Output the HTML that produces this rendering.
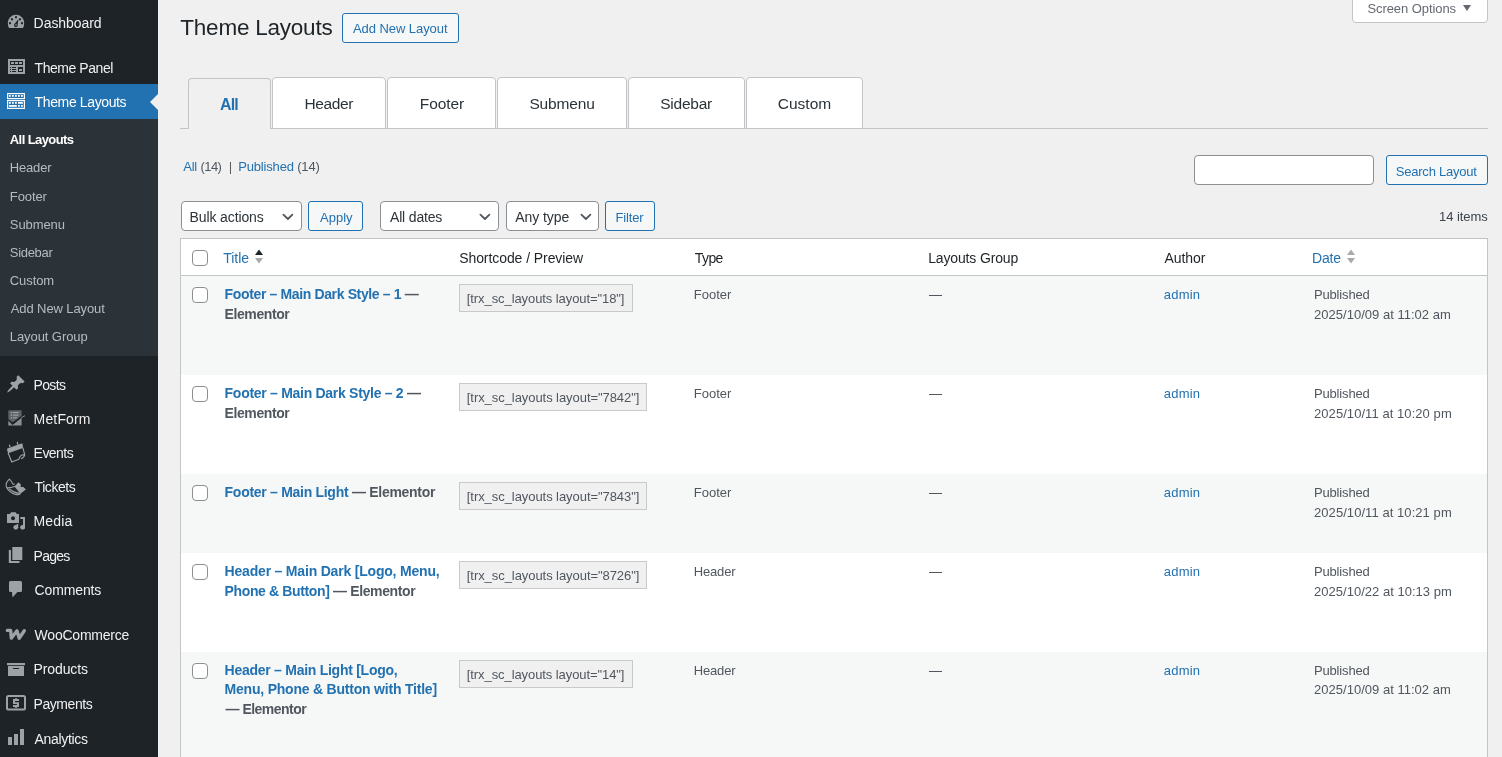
<!DOCTYPE html>
<html><head><meta charset="utf-8"><title>Theme Layouts</title>
<style>
html,body{margin:0;padding:0;width:1502px;height:757px;overflow:hidden;background:#f0f0f1;font-family:"Liberation Sans", sans-serif;}
#wrap{position:absolute;left:0;top:0;width:1502px;height:757px;background:#f0f0f1;will-change:transform;overflow:hidden}
</style></head><body><div id="wrap">
<div style="position:absolute;left:0px;top:0px;width:158px;height:757px;background:#1d2327"></div>
<div style="position:absolute;left:0px;top:119px;width:158px;height:237px;background:#2c3338"></div>
<div style="position:absolute;left:0px;top:84px;width:158px;height:35px;background:#2271b1"></div>
<div style="position:absolute;left:150px;top:94px;width:0;height:0;border-top:8px solid transparent;border-bottom:8px solid transparent;border-right:8px solid #f0f0f1"></div>
<div id="t1" style="position:absolute;left:33.60px;top:3.15px;line-height:40px;font-size:14px;font-weight:400;color:#f0f0f1;white-space:nowrap;letter-spacing:-0.056px;">Dashboard</div>
<div id="t2" style="position:absolute;left:34.60px;top:48.15px;line-height:40px;font-size:14px;font-weight:400;color:#f0f0f1;white-space:nowrap;letter-spacing:-0.450px;">Theme Panel</div>
<div id="t3" style="position:absolute;left:34.60px;top:82.15px;line-height:40px;font-size:14px;font-weight:400;color:#ffffff;white-space:nowrap;letter-spacing:-0.375px;">Theme Layouts</div>
<div id="t4" style="position:absolute;left:33.60px;top:365.15px;line-height:40px;font-size:14px;font-weight:400;color:#f0f0f1;white-space:nowrap;letter-spacing:-0.675px;">Posts</div>
<div id="t5" style="position:absolute;left:33.60px;top:399.15px;line-height:40px;font-size:14px;font-weight:400;color:#f0f0f1;white-space:nowrap;letter-spacing:0.150px;">MetForm</div>
<div id="t6" style="position:absolute;left:33.60px;top:433.15px;line-height:40px;font-size:14px;font-weight:400;color:#f0f0f1;white-space:nowrap;letter-spacing:-0.540px;">Events</div>
<div id="t7" style="position:absolute;left:34.60px;top:467.15px;line-height:40px;font-size:14px;font-weight:400;color:#f0f0f1;white-space:nowrap;letter-spacing:-0.450px;">Tickets</div>
<div id="t8" style="position:absolute;left:33.60px;top:501.15px;line-height:40px;font-size:14px;font-weight:400;color:#f0f0f1;white-space:nowrap;letter-spacing:0.112px;">Media</div>
<div id="t9" style="position:absolute;left:33.60px;top:536.15px;line-height:40px;font-size:14px;font-weight:400;color:#f0f0f1;white-space:nowrap;letter-spacing:-0.787px;">Pages</div>
<div id="t10" style="position:absolute;left:34.60px;top:570.15px;line-height:40px;font-size:14px;font-weight:400;color:#f0f0f1;white-space:nowrap;letter-spacing:-0.129px;">Comments</div>
<div id="t11" style="position:absolute;left:34.60px;top:615.15px;line-height:40px;font-size:14px;font-weight:400;color:#f0f0f1;white-space:nowrap;letter-spacing:-0.225px;">WooCommerce</div>
<div id="t12" style="position:absolute;left:33.60px;top:649.15px;line-height:40px;font-size:14px;font-weight:400;color:#f0f0f1;white-space:nowrap;letter-spacing:-0.129px;">Products</div>
<div id="t13" style="position:absolute;left:33.60px;top:684.15px;line-height:40px;font-size:14px;font-weight:400;color:#f0f0f1;white-space:nowrap;letter-spacing:-0.450px;">Payments</div>
<div id="t14" style="position:absolute;left:34.60px;top:719.15px;line-height:40px;font-size:14px;font-weight:400;color:#f0f0f1;white-space:nowrap;letter-spacing:-0.337px;">Analytics</div>
<div id="t15" style="position:absolute;left:9.80px;top:119.50px;line-height:40px;font-size:13px;font-weight:700;color:#ffffff;white-space:nowrap;letter-spacing:-0.585px;">All Layouts</div>
<div id="t16" style="position:absolute;left:9.80px;top:147.50px;line-height:40px;font-size:13px;font-weight:400;color:#b5bbc1;white-space:nowrap;letter-spacing:-0.180px;">Header</div>
<div id="t17" style="position:absolute;left:9.80px;top:176.50px;line-height:40px;font-size:13px;font-weight:400;color:#b5bbc1;white-space:nowrap;letter-spacing:-0.090px;">Footer</div>
<div id="t18" style="position:absolute;left:9.80px;top:204.50px;line-height:40px;font-size:13px;font-weight:400;color:#b5bbc1;white-space:nowrap;letter-spacing:-0.075px;">Submenu</div>
<div id="t19" style="position:absolute;left:9.80px;top:232.50px;line-height:40px;font-size:13px;font-weight:400;color:#b5bbc1;white-space:nowrap;letter-spacing:-0.300px;">Sidebar</div>
<div id="t20" style="position:absolute;left:9.80px;top:260.50px;line-height:40px;font-size:13px;font-weight:400;color:#b5bbc1;white-space:nowrap;letter-spacing:-0.090px;">Custom</div>
<div id="t21" style="position:absolute;left:10.80px;top:288.50px;line-height:40px;font-size:13px;font-weight:400;color:#b5bbc1;white-space:nowrap;letter-spacing:-0.104px;">Add New Layout</div>
<div id="t22" style="position:absolute;left:9.80px;top:316.50px;line-height:40px;font-size:13px;font-weight:400;color:#b5bbc1;white-space:nowrap;letter-spacing:-0.082px;">Layout Group</div>
<svg style="position:absolute;left:7px;top:14px" width="18" height="15" viewBox="0 0 18 15"><path d="M2 14 L16 14 Q17.2 11.5 17.2 9 A8.2 8.2 0 0 0 0.8 9 Q0.8 11.5 2 14 Z" fill="#9ca2a7"/>
<rect x="8" y="2.2" width="2" height="2" fill="#1d2327"/><rect x="4" y="4.3" width="2" height="2" fill="#1d2327"/><rect x="12" y="4.3" width="2" height="2" fill="#1d2327"/>
<rect x="2" y="8.2" width="2" height="2" fill="#1d2327"/><rect x="14" y="8.2" width="2" height="2" fill="#1d2327"/>
<path d="M11.6 5 L10.6 10.4 A1.9 1.9 0 1 1 7.6 9.8 Z" fill="#1d2327"/><circle cx="9" cy="11" r="0.8" fill="#9ca2a7"/></svg>
<svg style="position:absolute;left:8px;top:59px" width="17" height="15" viewBox="0 0 17 15"><rect x="0" y="0" width="17" height="15" fill="#9ca2a7"/>
<rect x="2" y="2" width="13" height="4" fill="#1d2327"/><rect x="3" y="3" width="3" height="2" fill="#9ca2a7"/><rect x="7" y="3" width="3" height="2" fill="#9ca2a7"/><rect x="11" y="3" width="3" height="2" fill="#9ca2a7"/>
<rect x="2" y="8" width="1" height="1" fill="#1d2327"/><rect x="4" y="8" width="4" height="1" fill="#1d2327"/>
<rect x="2" y="10" width="1" height="1" fill="#1d2327"/><rect x="4" y="10" width="4" height="1" fill="#1d2327"/>
<rect x="2" y="12" width="1" height="1" fill="#1d2327"/><rect x="4" y="12" width="4" height="1" fill="#1d2327"/>
<rect x="10" y="8" width="5" height="5" fill="#1d2327"/><rect x="11" y="10" width="3" height="2" fill="#9ca2a7"/></svg>
<svg style="position:absolute;left:7px;top:93px" width="18" height="16" viewBox="0 0 18 16"><rect x="0.6" y="0.6" width="16.8" height="5" fill="none" stroke="#ffffff" stroke-width="1.2"/>
<rect x="2" y="2" width="1.8" height="1.8" fill="#ffffff"/><rect x="5" y="2" width="1.8" height="1.8" fill="#ffffff"/><rect x="8" y="2" width="1.8" height="1.8" fill="#ffffff"/><rect x="11" y="2" width="1.8" height="1.8" fill="#ffffff"/><rect x="14" y="2" width="1.8" height="1.8" fill="#ffffff"/>
<rect x="0.6" y="7.6" width="16.8" height="7.8" fill="none" stroke="#ffffff" stroke-width="1.2"/>
<rect x="2" y="9" width="1.8" height="1.8" fill="#ffffff"/><rect x="5" y="9" width="1.8" height="1.8" fill="#ffffff"/><rect x="8" y="9" width="1.8" height="1.8" fill="#ffffff"/><rect x="11" y="9" width="4.8" height="1.8" fill="#ffffff"/>
<rect x="2" y="12" width="7.8" height="1.8" fill="#ffffff"/><rect x="11" y="12" width="1.8" height="1.8" fill="#ffffff"/><rect x="14" y="12" width="1.8" height="1.8" fill="#ffffff"/></svg>
<svg style="position:absolute;left:6px;top:374px" width="20" height="20" viewBox="0 0 20 20"><path d="M10.44 3.02l1.82-1.82 6.36 6.35-1.83 1.82c-1.05-.68-2.48-.57-3.41.36l-.75.75c-.92.93-1.04 2.35-.35 3.41l-1.83 1.82-2.41-2.41-2.8 2.79c-.42.42-3.38 2.71-3.8 2.29s1.86-3.39 2.28-3.81l2.79-2.79L4.1 9.36l1.83-1.82c1.05.69 2.48.57 3.4-.36l.75-.75c.93-.92 1.05-2.35.36-3.41z" fill="#9ca2a7"/></svg>
<svg style="position:absolute;left:8px;top:410px" width="18" height="16" viewBox="0 0 18 16"><path d="M0.8 0.5 Q0.3 0.2 0.3 1 V9.2 L4.6 12.3 L13.6 5.8 V1 Q13.6 0.2 13 0.2 H1 Z" fill="#5f6367"/>
<path d="M0.3 10.8 L4.6 14.9 L13.6 7.7 V15.6 H0.3 Z" fill="#8b8f93"/>
<path d="M13.3 7.6 L17 5.7" stroke="#8b8f93" stroke-width="1"/>
<rect x="2.8" y="2" width="1.4" height="1.3" fill="#9ca2a7"/><rect x="5" y="2" width="5.6" height="1.1" fill="#9ca2a7"/>
<rect x="2.8" y="4.6" width="1.4" height="1.3" fill="#9ca2a7"/><rect x="5" y="4.6" width="5.6" height="1.1" fill="#9ca2a7"/>
<rect x="2.8" y="7.2" width="1.4" height="1.3" fill="#9ca2a7"/><rect x="5" y="7.2" width="4" height="1.1" fill="#9ca2a7"/></svg>
<svg style="position:absolute;left:5px;top:440px" width="22" height="24" viewBox="0 0 22 24"><path d="M2.2 8.6 L16.4 3.6 Q17.5 3.3 17.7 4.4 L17.9 7.9 L3.2 13.3 L2.2 10.6 Z" fill="#9ca2a7"/>
<path d="M4.5 5.2 L4.9 6.6 M12.4 2.5 L12.6 4.1" stroke="#9ca2a7" stroke-width="1.3" stroke-linecap="round"/>
<path d="M3.2 13.2 L6.8 22 L13.9 19.2 Q15 15.6 16.8 15 L19.7 14.6 M17.9 7.9 L19.7 14.6 Q19.6 17.2 16.5 18.6" fill="none" stroke="#9ca2a7" stroke-width="1.15" stroke-linejoin="round" stroke-linecap="round"/></svg>
<svg style="position:absolute;left:4px;top:476px" width="24" height="22" viewBox="0 0 24 22"><path d="M10.5 10.6 L14.5 6.2 L16.9 8.6 L16.6 11 L19.4 11.1 L21.9 13.5 L16.3 17.8 Z" fill="#9ca2a7"/>
<path d="M10.4 8.1 Q8.9 8.6 8.2 7 Q7.6 5.2 6.6 4.6 L5.4 3.1 Q1.2 6.5 2.4 11 Q5 16.5 11.5 18.4 Q14.5 19 16.3 17.8 M3.4 11.9 Q7 11.8 10.6 10.6 M5.6 13 Q9 16.4 15.6 17.4" fill="none" stroke="#9ca2a7" stroke-width="1.1" stroke-linejoin="round" stroke-linecap="round"/></svg>
<svg style="position:absolute;left:7px;top:512px" width="18" height="18" viewBox="0 0 18 18"><path d="M0 2 H3 L4 0.2 H8.8 L9.8 2 H12 V11 H0 Z" fill="#9ca2a7"/>
<circle cx="6" cy="6.2" r="2" fill="#1d2327"/>
<rect x="13.3" y="5" width="4.7" height="2" fill="#9ca2a7"/><rect x="16" y="5" width="2" height="11.6" fill="#9ca2a7"/><circle cx="15.6" cy="15.3" r="2.4" fill="#9ca2a7"/>
<rect x="9.6" y="12" width="1.6" height="3.5" fill="#9ca2a7"/><circle cx="8.8" cy="15.3" r="2.4" fill="#9ca2a7"/></svg>
<svg style="position:absolute;left:8px;top:546px" width="15" height="17" viewBox="0 0 15 17"><rect x="4.3" y="1" width="10" height="13" fill="#9ca2a7"/>
<path d="M0.8 4 H3 V15 H11.5 V17 H0.8 Z" fill="#9ca2a7"/></svg>
<svg style="position:absolute;left:8px;top:580px" width="15" height="18" viewBox="0 0 15 18"><path d="M2.5 1 H12.5 Q14 1 14 2.5 V10.5 Q14 12 12.5 12 H9.5 L4.5 17.5 L4 12 H2.5 Q1 12 1 10.5 V2.5 Q1 1 2.5 1 Z" fill="#9ca2a7"/></svg>
<svg style="position:absolute;left:5px;top:628px" width="22" height="13" viewBox="0 0 22 13"><polyline points="2.3,2.4 5.7,2.4 6.3,10.2 12,2.7 14.2,10.2 19.3,2.7" fill="none" stroke="#9ca2a7" stroke-width="3.3" stroke-linecap="round" stroke-linejoin="round"/></svg>
<svg style="position:absolute;left:7px;top:662px" width="18" height="15" viewBox="0 0 18 15"><rect x="0" y="1" width="18" height="2.2" fill="#9ca2a7"/>
<path d="M1 4 H17 V14 H1 Z M6 6 V7.1 H12 V6 Z" fill="#9ca2a7" fill-rule="evenodd"/></svg>
<svg style="position:absolute;left:6px;top:694px" width="20" height="17" viewBox="0 0 20 17"><rect x="1" y="2" width="18" height="13.5" rx="1.6" fill="none" stroke="#9ca2a7" stroke-width="2"/>
<path d="M7 5 H13 V7.1 H9.1 V8.2 H13 V13 H7 V11.1 H10.9 V10.1 H7 Z" fill="#9ca2a7"/>
<rect x="9.1" y="4.2" width="1.9" height="1" fill="#9ca2a7"/><rect x="9.1" y="12.9" width="1.9" height="1" fill="#9ca2a7"/></svg>
<svg style="position:absolute;left:8px;top:728px" width="17" height="17" viewBox="0 0 17 17"><rect x="0" y="9" width="4" height="8" fill="#9ca2a7"/><rect x="6" y="6" width="4" height="11" fill="#9ca2a7"/><rect x="12" y="1" width="4" height="16" fill="#9ca2a7"/></svg>
<div style="position:absolute;left:1352px;top:-1px;width:134px;height:22px;background:#fff;border:1px solid #c3c4c7;border-radius:0 0 4px 4px"></div>
<div id="t23" style="position:absolute;left:1367.40px;top:-11.50px;line-height:40px;font-size:13px;font-weight:400;color:#646970;white-space:nowrap;letter-spacing:-0.069px;">Screen Options</div>
<div style="position:absolute;left:1463px;top:5px;width:0;height:0;border-left:4px solid transparent;border-right:4px solid transparent;border-top:6px solid #646970"></div>
<div id="t24" style="position:absolute;left:180.30px;top:8.20px;line-height:40px;font-size:22.5px;font-weight:400;color:#1d2327;white-space:nowrap;letter-spacing:-0.225px;">Theme Layouts</div>
<div style="position:absolute;left:342px;top:13px;width:115px;height:28px;background:#f6f7f7;border:1px solid #2271b1;border-radius:3px"></div>
<div id="t25" style="position:absolute;left:353.00px;top:8.50px;line-height:40px;font-size:13px;font-weight:400;color:#2271b1;white-space:nowrap;letter-spacing:-0.069px;">Add New Layout</div>
<div style="position:absolute;left:180px;top:128px;width:1308px;height:1px;background:#c3c4c7"></div>
<div style="position:absolute;left:188px;top:78px;width:81px;height:50px;background:#f0f0f1;border:1px solid #c3c4c7;border-bottom:none;border-radius:4px 4px 0 0"></div>
<div id="t26" style="position:absolute;left:220.00px;top:85.46px;line-height:40px;font-size:16px;font-weight:700;color:#2271b1;white-space:nowrap;letter-spacing:-0.900px;">All</div>
<div style="position:absolute;left:272px;top:77px;width:112px;height:50px;background:#fff;border:1px solid #c3c4c7;border-radius:4px 4px 0 0"></div>
<div id="t27" style="position:absolute;left:304.40px;top:83.63px;line-height:40px;font-size:15.5px;font-weight:400;color:#2c3338;white-space:nowrap;letter-spacing:-0.360px;">Header</div>
<div style="position:absolute;left:387px;top:77px;width:107px;height:50px;background:#fff;border:1px solid #c3c4c7;border-radius:4px 4px 0 0"></div>
<div id="t28" style="position:absolute;left:419.80px;top:83.63px;line-height:40px;font-size:15.5px;font-weight:400;color:#2c3338;white-space:nowrap;letter-spacing:-0.090px;">Footer</div>
<div style="position:absolute;left:497px;top:77px;width:128px;height:50px;background:#fff;border:1px solid #c3c4c7;border-radius:4px 4px 0 0"></div>
<div id="t29" style="position:absolute;left:529.40px;top:83.63px;line-height:40px;font-size:15.5px;font-weight:400;color:#2c3338;white-space:nowrap;letter-spacing:-0.150px;">Submenu</div>
<div style="position:absolute;left:628px;top:77px;width:115px;height:50px;background:#fff;border:1px solid #c3c4c7;border-radius:4px 4px 0 0"></div>
<div id="t30" style="position:absolute;left:660.20px;top:83.63px;line-height:40px;font-size:15.5px;font-weight:400;color:#2c3338;white-space:nowrap;letter-spacing:-0.225px;">Sidebar</div>
<div style="position:absolute;left:746px;top:77px;width:115px;height:50px;background:#fff;border:1px solid #c3c4c7;border-radius:4px 4px 0 0"></div>
<div id="t31" style="position:absolute;left:777.80px;top:83.63px;line-height:40px;font-size:15.5px;font-weight:400;color:#2c3338;white-space:nowrap;letter-spacing:0.000px;">Custom</div>
<div id="t32" style="position:absolute;left:183.20px;top:146.50px;line-height:40px;font-size:13px;font-weight:400;color:#2271b1;white-space:nowrap;letter-spacing:-0.225px;">All</div>
<div id="t33" style="position:absolute;left:200.60px;top:146.50px;line-height:40px;font-size:13px;font-weight:400;color:#50575e;white-space:nowrap;letter-spacing:-0.600px;">(14)</div>
<div style="position:absolute;left:230px;top:162px;width:1px;height:12px;background:#50575e"></div>
<div id="t34" style="position:absolute;left:238.20px;top:146.50px;line-height:40px;font-size:13px;font-weight:400;color:#2271b1;white-space:nowrap;letter-spacing:-0.169px;">Published</div>
<div id="t35" style="position:absolute;left:297.20px;top:146.50px;line-height:40px;font-size:13px;font-weight:400;color:#50575e;white-space:nowrap;letter-spacing:-0.150px;">(14)</div>
<div style="position:absolute;left:181px;top:201px;width:119px;height:28px;background:#fff;border:1px solid #8c8f94;border-radius:4px"></div>
<div id="t36" style="position:absolute;left:189.60px;top:197.15px;line-height:40px;font-size:14px;font-weight:400;color:#2c3338;white-space:nowrap;letter-spacing:-0.123px;">Bulk actions</div>
<svg style="position:absolute;left:282px;top:213px" width="12" height="8" viewBox="0 0 12 8"><path d="M1.4 1.6 L5.9 6 L10.4 1.6" fill="none" stroke="#50575e" stroke-width="1.8" stroke-linecap="round" stroke-linejoin="round"/></svg>
<div style="position:absolute;left:308px;top:201px;width:53px;height:28px;background:#f6f7f7;border:1px solid #2271b1;border-radius:3px"></div>
<div id="t37" style="position:absolute;left:320.00px;top:197.50px;line-height:40px;font-size:13px;font-weight:400;color:#2271b1;white-space:nowrap;">Apply</div>
<div style="position:absolute;left:380px;top:201px;width:117px;height:28px;background:#fff;border:1px solid #8c8f94;border-radius:4px"></div>
<div id="t38" style="position:absolute;left:390.00px;top:197.15px;line-height:40px;font-size:14px;font-weight:400;color:#2c3338;white-space:nowrap;letter-spacing:-0.169px;">All dates</div>
<svg style="position:absolute;left:479px;top:213px" width="12" height="8" viewBox="0 0 12 8"><path d="M1.4 1.6 L5.9 6 L10.4 1.6" fill="none" stroke="#50575e" stroke-width="1.8" stroke-linecap="round" stroke-linejoin="round"/></svg>
<div style="position:absolute;left:506px;top:201px;width:91px;height:28px;background:#fff;border:1px solid #8c8f94;border-radius:4px"></div>
<div id="t39" style="position:absolute;left:515.20px;top:197.15px;line-height:40px;font-size:14px;font-weight:400;color:#2c3338;white-space:nowrap;letter-spacing:-0.064px;">Any type</div>
<svg style="position:absolute;left:579.5px;top:213px" width="12" height="8" viewBox="0 0 12 8"><path d="M1.4 1.6 L5.9 6 L10.4 1.6" fill="none" stroke="#50575e" stroke-width="1.8" stroke-linecap="round" stroke-linejoin="round"/></svg>
<div style="position:absolute;left:605px;top:201px;width:48px;height:28px;background:#f6f7f7;border:1px solid #2271b1;border-radius:3px"></div>
<div id="t40" style="position:absolute;left:615.60px;top:197.50px;line-height:40px;font-size:13px;font-weight:400;color:#2271b1;white-space:nowrap;letter-spacing:-0.180px;">Filter</div>
<div style="position:absolute;left:1194px;top:155px;width:178px;height:28px;background:#fff;border:1px solid #8c8f94;border-radius:4px"></div>
<div style="position:absolute;left:1386px;top:155px;width:100px;height:28px;background:#f6f7f7;border:1px solid #2271b1;border-radius:3px"></div>
<div id="t41" style="position:absolute;left:1395.80px;top:151.50px;line-height:40px;font-size:13px;font-weight:400;color:#2271b1;white-space:nowrap;letter-spacing:-0.225px;">Search Layout</div>
<div id="t42" style="position:absolute;left:1439.00px;top:196.50px;line-height:40px;font-size:13px;font-weight:400;color:#3c434a;white-space:nowrap;letter-spacing:-0.064px;">14 items</div>
<div style="position:absolute;left:180px;top:238px;width:1306px;height:530px;background:#fff;border:1px solid #c3c4c7"></div>
<div style="position:absolute;left:181px;top:275px;width:1306px;height:1px;background:#c3c4c7"></div>
<div style="position:absolute;left:181px;top:276px;width:1306px;height:99px;background:#f6f7f7"></div>
<div style="position:absolute;left:181px;top:474px;width:1306px;height:79px;background:#f6f7f7"></div>
<div style="position:absolute;left:181px;top:652px;width:1306px;height:105px;background:#f6f7f7"></div>
<div style="position:absolute;left:192px;top:250px;width:14px;height:14px;background:#fff;border:1px solid #8c8f94;border-radius:4px"></div>
<div id="t43" style="position:absolute;left:223.20px;top:238.15px;line-height:40px;font-size:14px;font-weight:400;color:#2271b1;white-space:nowrap;letter-spacing:0.000px;">Title</div>
<svg style="position:absolute;left:254px;top:248px" width="10" height="17" viewBox="0 0 10 17"><path d="M1 7 L5 1.5 L9 7 Z" fill="#1d2327"/><path d="M1 10 L9 10 L5 15.5 Z" fill="#a7aaad"/></svg>
<div id="t44" style="position:absolute;left:459.20px;top:238.15px;line-height:40px;font-size:14px;font-weight:400;color:#1d2327;white-space:nowrap;letter-spacing:-0.075px;">Shortcode / Preview</div>
<div id="t45" style="position:absolute;left:694.80px;top:238.15px;line-height:40px;font-size:14px;font-weight:400;color:#1d2327;white-space:nowrap;letter-spacing:-0.600px;">Type</div>
<div id="t46" style="position:absolute;left:928.20px;top:238.15px;line-height:40px;font-size:14px;font-weight:400;color:#1d2327;white-space:nowrap;letter-spacing:-0.150px;">Layouts Group</div>
<div id="t47" style="position:absolute;left:1164.60px;top:238.15px;line-height:40px;font-size:14px;font-weight:400;color:#1d2327;white-space:nowrap;letter-spacing:-0.090px;">Author</div>
<div id="t48" style="position:absolute;left:1312.00px;top:238.15px;line-height:40px;font-size:14px;font-weight:400;color:#2271b1;white-space:nowrap;letter-spacing:-0.150px;">Date</div>
<svg style="position:absolute;left:1346px;top:248px" width="10" height="17" viewBox="0 0 10 17"><path d="M1 7 L5 1.5 L9 7 Z" fill="#a7aaad"/><path d="M1 10 L9 10 L5 15.5 Z" fill="#a7aaad"/></svg>
<div style="position:absolute;left:192px;top:287px;width:14px;height:14px;background:#fff;border:1px solid #8c8f94;border-radius:4px"></div>
<div id="t49" style="position:absolute;left:224.60px;top:274.15px;line-height:40px;font-size:14px;font-weight:700;color:#50575e;white-space:nowrap;letter-spacing:-0.362px;"><span style="color:#2271b1">Footer – Main Dark Style – 1</span> —</div>
<div id="t50" style="position:absolute;left:224.60px;top:294.15px;line-height:40px;font-size:14px;font-weight:700;color:#50575e;white-space:nowrap;letter-spacing:-0.412px;">Elementor</div>
<div style="position:absolute;left:459px;top:284px;width:172px;height:26px;background:#f0f0f1;border:1px solid #c8c9ca"></div>
<div id="t51" style="position:absolute;left:466.80px;top:278.50px;line-height:40px;font-size:13px;font-weight:400;color:#50575e;white-space:nowrap;letter-spacing:-0.083px;">[trx_sc_layouts layout="18"]</div>
<div id="t52" style="position:absolute;left:693.80px;top:274.50px;line-height:40px;font-size:13px;font-weight:400;color:#50575e;white-space:nowrap;letter-spacing:0.000px;">Footer</div>
<div style="position:absolute;left:929px;top:295px;width:13px;height:1px;background:#50575e"></div>
<div id="t53" style="position:absolute;left:1163.80px;top:274.50px;line-height:40px;font-size:13px;font-weight:400;color:#2271b1;white-space:nowrap;letter-spacing:0.225px;">admin</div>
<div id="t54" style="position:absolute;left:1314.00px;top:274.50px;line-height:40px;font-size:13px;font-weight:400;color:#50575e;white-space:nowrap;letter-spacing:-0.169px;">Published</div>
<div id="t55" style="position:absolute;left:1314.00px;top:294.50px;line-height:40px;font-size:13px;font-weight:400;color:#50575e;white-space:nowrap;letter-spacing:0.021px;">2025/10/09 at 11:02 am</div>
<div style="position:absolute;left:192px;top:386px;width:14px;height:14px;background:#fff;border:1px solid #8c8f94;border-radius:4px"></div>
<div id="t56" style="position:absolute;left:224.60px;top:373.15px;line-height:40px;font-size:14px;font-weight:700;color:#50575e;white-space:nowrap;letter-spacing:-0.284px;"><span style="color:#2271b1">Footer – Main Dark Style – 2</span> —</div>
<div id="t57" style="position:absolute;left:224.60px;top:393.15px;line-height:40px;font-size:14px;font-weight:700;color:#50575e;white-space:nowrap;letter-spacing:-0.412px;">Elementor</div>
<div style="position:absolute;left:459px;top:383px;width:186px;height:26px;background:#f0f0f1;border:1px solid #c8c9ca"></div>
<div id="t58" style="position:absolute;left:466.80px;top:377.50px;line-height:40px;font-size:13px;font-weight:400;color:#50575e;white-space:nowrap;letter-spacing:-0.062px;">[trx_sc_layouts layout="7842"]</div>
<div id="t59" style="position:absolute;left:693.80px;top:373.50px;line-height:40px;font-size:13px;font-weight:400;color:#50575e;white-space:nowrap;letter-spacing:0.000px;">Footer</div>
<div style="position:absolute;left:929px;top:394px;width:13px;height:1px;background:#50575e"></div>
<div id="t60" style="position:absolute;left:1163.80px;top:373.50px;line-height:40px;font-size:13px;font-weight:400;color:#2271b1;white-space:nowrap;letter-spacing:0.225px;">admin</div>
<div id="t61" style="position:absolute;left:1314.00px;top:373.50px;line-height:40px;font-size:13px;font-weight:400;color:#50575e;white-space:nowrap;letter-spacing:-0.169px;">Published</div>
<div id="t62" style="position:absolute;left:1314.00px;top:393.50px;line-height:40px;font-size:13px;font-weight:400;color:#50575e;white-space:nowrap;letter-spacing:0.064px;">2025/10/11 at 10:20 pm</div>
<div style="position:absolute;left:192px;top:485px;width:14px;height:14px;background:#fff;border:1px solid #8c8f94;border-radius:4px"></div>
<div id="t63" style="position:absolute;left:224.60px;top:472.15px;line-height:40px;font-size:14px;font-weight:700;color:#50575e;white-space:nowrap;letter-spacing:-0.285px;"><span style="color:#2271b1">Footer – Main Light</span> — Elementor</div>
<div style="position:absolute;left:459px;top:482px;width:186px;height:26px;background:#f0f0f1;border:1px solid #c8c9ca"></div>
<div id="t64" style="position:absolute;left:466.80px;top:476.50px;line-height:40px;font-size:13px;font-weight:400;color:#50575e;white-space:nowrap;letter-spacing:-0.062px;">[trx_sc_layouts layout="7843"]</div>
<div id="t65" style="position:absolute;left:693.80px;top:472.50px;line-height:40px;font-size:13px;font-weight:400;color:#50575e;white-space:nowrap;letter-spacing:0.000px;">Footer</div>
<div style="position:absolute;left:929px;top:493px;width:13px;height:1px;background:#50575e"></div>
<div id="t66" style="position:absolute;left:1163.80px;top:472.50px;line-height:40px;font-size:13px;font-weight:400;color:#2271b1;white-space:nowrap;letter-spacing:0.225px;">admin</div>
<div id="t67" style="position:absolute;left:1314.00px;top:472.50px;line-height:40px;font-size:13px;font-weight:400;color:#50575e;white-space:nowrap;letter-spacing:-0.169px;">Published</div>
<div id="t68" style="position:absolute;left:1314.00px;top:492.50px;line-height:40px;font-size:13px;font-weight:400;color:#50575e;white-space:nowrap;letter-spacing:0.064px;">2025/10/11 at 10:21 pm</div>
<div style="position:absolute;left:192px;top:564px;width:14px;height:14px;background:#fff;border:1px solid #8c8f94;border-radius:4px"></div>
<div id="t69" style="position:absolute;left:224.60px;top:551.15px;line-height:40px;font-size:14px;font-weight:700;color:#50575e;white-space:nowrap;letter-spacing:-0.195px;"><span style="color:#2271b1">Header – Main Dark [Logo, Menu,</span></div>
<div id="t70" style="position:absolute;left:224.60px;top:571.15px;line-height:40px;font-size:14px;font-weight:700;color:#50575e;white-space:nowrap;letter-spacing:-0.369px;"><span style="color:#2271b1">Phone &amp; Button]</span> — Elementor</div>
<div style="position:absolute;left:459px;top:561px;width:186px;height:26px;background:#f0f0f1;border:1px solid #c8c9ca"></div>
<div id="t71" style="position:absolute;left:466.80px;top:555.50px;line-height:40px;font-size:13px;font-weight:400;color:#50575e;white-space:nowrap;letter-spacing:-0.062px;">[trx_sc_layouts layout="8726"]</div>
<div id="t72" style="position:absolute;left:693.80px;top:551.50px;line-height:40px;font-size:13px;font-weight:400;color:#50575e;white-space:nowrap;letter-spacing:-0.180px;">Header</div>
<div style="position:absolute;left:929px;top:572px;width:13px;height:1px;background:#50575e"></div>
<div id="t73" style="position:absolute;left:1163.80px;top:551.50px;line-height:40px;font-size:13px;font-weight:400;color:#2271b1;white-space:nowrap;letter-spacing:0.225px;">admin</div>
<div id="t74" style="position:absolute;left:1314.00px;top:551.50px;line-height:40px;font-size:13px;font-weight:400;color:#50575e;white-space:nowrap;letter-spacing:-0.169px;">Published</div>
<div id="t75" style="position:absolute;left:1314.00px;top:571.50px;line-height:40px;font-size:13px;font-weight:400;color:#50575e;white-space:nowrap;letter-spacing:0.021px;">2025/10/22 at 10:13 pm</div>
<div style="position:absolute;left:192px;top:663px;width:14px;height:14px;background:#fff;border:1px solid #8c8f94;border-radius:4px"></div>
<div id="t76" style="position:absolute;left:224.60px;top:650.15px;line-height:40px;font-size:14px;font-weight:700;color:#50575e;white-space:nowrap;letter-spacing:-0.264px;"><span style="color:#2271b1">Header – Main Light [Logo,</span></div>
<div id="t77" style="position:absolute;left:224.60px;top:669.15px;line-height:40px;font-size:14px;font-weight:700;color:#50575e;white-space:nowrap;letter-spacing:-0.213px;"><span style="color:#2271b1">Menu, Phone &amp; Button with Title]</span></div>
<div id="t78" style="position:absolute;left:225.60px;top:689.15px;line-height:40px;font-size:14px;font-weight:700;color:#50575e;white-space:nowrap;letter-spacing:-0.525px;">— Elementor</div>
<div style="position:absolute;left:459px;top:660px;width:172px;height:26px;background:#f0f0f1;border:1px solid #c8c9ca"></div>
<div id="t79" style="position:absolute;left:466.80px;top:654.50px;line-height:40px;font-size:13px;font-weight:400;color:#50575e;white-space:nowrap;letter-spacing:-0.083px;">[trx_sc_layouts layout="14"]</div>
<div id="t80" style="position:absolute;left:693.80px;top:650.50px;line-height:40px;font-size:13px;font-weight:400;color:#50575e;white-space:nowrap;letter-spacing:-0.180px;">Header</div>
<div style="position:absolute;left:929px;top:671px;width:13px;height:1px;background:#50575e"></div>
<div id="t81" style="position:absolute;left:1163.80px;top:650.50px;line-height:40px;font-size:13px;font-weight:400;color:#2271b1;white-space:nowrap;letter-spacing:0.225px;">admin</div>
<div id="t82" style="position:absolute;left:1314.00px;top:650.50px;line-height:40px;font-size:13px;font-weight:400;color:#50575e;white-space:nowrap;letter-spacing:-0.169px;">Published</div>
<div id="t83" style="position:absolute;left:1314.00px;top:669.50px;line-height:40px;font-size:13px;font-weight:400;color:#50575e;white-space:nowrap;letter-spacing:0.021px;">2025/10/09 at 11:02 am</div>
</div></body></html>
